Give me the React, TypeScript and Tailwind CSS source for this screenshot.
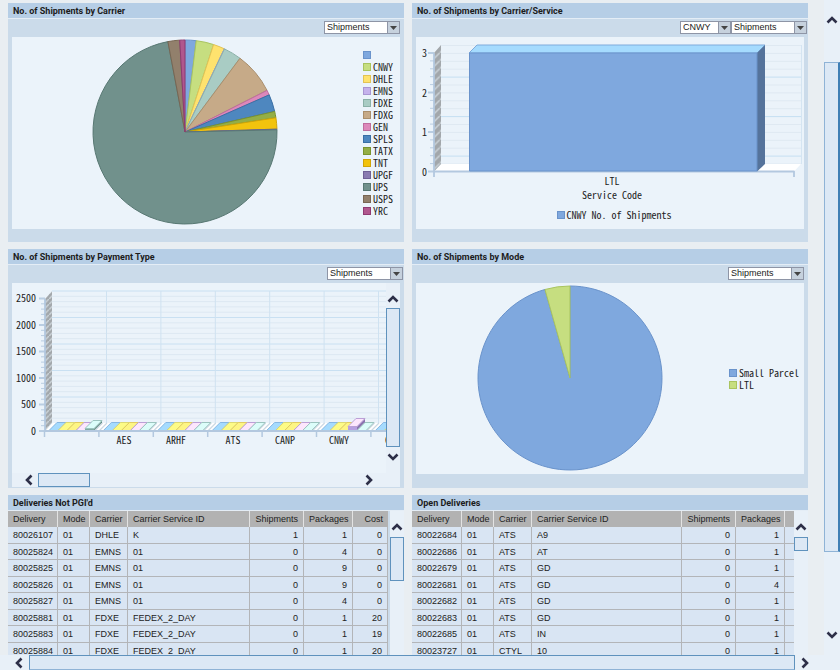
import type { ReactNode } from "react";

type Slice = { label: string; color: string; stroke: string; end: number };

const CARRIERS: Slice[] = [
  { label: "", color: "#7fa8de", stroke: "#6a93cb", end: 7 },
  { label: "CNWY", color: "#c6de80", stroke: "#a9c45f", end: 18.1 },
  { label: "DHLE", color: "#fee26e", stroke: "#e2c355", end: 25.3 },
  { label: "EMNS", color: "#c5b2ec", stroke: "#a896d2", end: 25.4 },
  { label: "FDXE", color: "#a9ccc4", stroke: "#8bb1a8", end: 36.7 },
  { label: "FDXG", color: "#c6aa88", stroke: "#a98e6c", end: 63.1 },
  { label: "GEN", color: "#dc88ba", stroke: "#bf6c9e", end: 66.2 },
  { label: "SPLS", color: "#4e87bf", stroke: "#3a6fa5", end: 77.1 },
  { label: "TATX", color: "#94ae45", stroke: "#7a932e", end: 81.1 },
  { label: "TNT", color: "#f2c30d", stroke: "#d0a508", end: 88.2 },
  { label: "UPGF", color: "#897bb1", stroke: "#6e6096", end: 88.6 },
  { label: "UPS", color: "#71918c", stroke: "#587873", end: 349.3 },
  { label: "USPS", color: "#92806c", stroke: "#786653", end: 356.7 },
  { label: "YRC", color: "#b0578e", stroke: "#8f3a72", end: 360 },
];

const MODES: Slice[] = [
  { label: "Small Parcel", color: "#7fa8de", stroke: "#6a93cb", end: 344.2 },
  { label: "LTL", color: "#c6de80", stroke: "#a9c45f", end: 360 },
];

const NOT_PGI = [
  ["80026107", "01", "DHLE", "K", "1", "1", "0"],
  ["80025824", "01", "EMNS", "01", "0", "4", "0"],
  ["80025825", "01", "EMNS", "01", "0", "9", "0"],
  ["80025826", "01", "EMNS", "01", "0", "9", "0"],
  ["80025827", "01", "EMNS", "01", "0", "4", "0"],
  ["80025881", "01", "FDXE", "FEDEX_2_DAY", "0", "1", "20"],
  ["80025883", "01", "FDXE", "FEDEX_2_DAY", "0", "1", "19"],
  ["80025884", "01", "FDXE", "FEDEX_2_DAY", "0", "1", "20"],
];

const OPEN = [
  ["80022684", "01", "ATS", "A9", "0", "1", ""],
  ["80022686", "01", "ATS", "AT", "0", "1", ""],
  ["80022679", "01", "ATS", "GD", "0", "1", ""],
  ["80022681", "01", "ATS", "GD", "0", "4", ""],
  ["80022682", "01", "ATS", "GD", "0", "1", ""],
  ["80022683", "01", "ATS", "GD", "0", "1", ""],
  ["80022685", "01", "ATS", "IN", "0", "1", ""],
  ["80023727", "01", "CTYL", "10", "0", "1", ""],
];

const CHART_FONT =
  "font-['Noto_Sans_Mono_CJK_SC','DejaVu_Sans_Mono',monospace] text-[10px] leading-3 text-[#222]";

const ARROWS = {
  up: "M1.5 8.5 6 4l4.5 4.5",
  down: "M1.5 3.5 6 8l4.5-4.5",
  left: "M8.5 1.5 4 6l4.5 4.5",
  right: "M3.5 1.5 8 6l-4.5 4.5",
};

function Arrow({ dir }: { dir: keyof typeof ARROWS }) {
  return (
    <button
      type="button"
      aria-label={`Scroll ${dir}`}
      className="flex size-3 shrink-0 cursor-pointer items-center justify-center"
    >
      <svg viewBox="0 0 12 12" className="size-3" fill="none" stroke="#2d2f48" strokeWidth="2.6">
        <path d={ARROWS[dir]} />
      </svg>
    </button>
  );
}

function Picker({ label, value, width }: { label: string; value: string; width: string }) {
  return (
    <div className={`relative h-[13px] ${width}`}>
      <select
        aria-label={label}
        defaultValue={value}
        className="block h-full w-full appearance-none rounded-none border border-[#8e95a6] bg-white pl-0.5 text-[9px] leading-[11px] text-[#222]"
      >
        <option>{value}</option>
      </select>
      <span className="pointer-events-none absolute inset-y-0 right-0 flex w-[13px] items-center justify-center border border-[#8e95a6] bg-[#c6d1dd]">
        <svg viewBox="0 0 7 4" className="h-1 w-[7px]">
          <path d="M0 0h7L3.5 4z" fill="#444" />
        </svg>
      </span>
    </div>
  );
}

function PanelTitle({ children }: { children: ReactNode }) {
  return (
    <h2 className="h-4 shrink-0 border-b border-[#e4edf6] bg-[#b6cee6] px-[5px] font-[Roboto,sans-serif] text-[9px] leading-4 font-bold text-[#1c1c1c]">
      {children}
    </h2>
  );
}

function ChartPanel({
  title,
  tools,
  inset = "pr-1",
  children,
}: {
  title: string;
  tools: ReactNode;
  inset?: string;
  children: ReactNode;
}) {
  return (
    <section className="flex min-h-[239px] flex-col bg-[#cbdbea]">
      <PanelTitle>{title}</PanelTitle>
      <div className={`flex h-[18px] shrink-0 justify-end pt-0.5 ${inset}`}>{tools}</div>
      {children}
    </section>
  );
}

function Swatch({ color, stroke }: { color: string; stroke: string }) {
  return (
    <svg viewBox="0 0 8 8" className="size-2 shrink-0">
      <rect x=".5" y=".5" width="7" height="7" fill={color} stroke={stroke} />
    </svg>
  );
}

function slicePath(start: number, end: number) {
  const at = (deg: number) => {
    const a = (deg * Math.PI) / 180;
    return `${93 + 92 * Math.sin(a)} ${93 - 92 * Math.cos(a)}`;
  };
  return `M93 93 L${at(start)} A92 92 0 ${end - start > 180 ? 1 : 0} 1 ${at(end)}Z`;
}

function Pie({ slices, name }: { slices: Slice[]; name: string }) {
  return (
    <svg viewBox="0 0 186 186" className="size-[186px] shrink-0" role="img" aria-label={name}>
      {slices.map((s, i) => (
        <path
          key={s.label}
          d={slicePath(i ? slices[i - 1].end : 0, s.end)}
          fill={s.color}
          stroke={s.stroke}
          strokeLinejoin="round"
        />
      ))}
    </svg>
  );
}

function Legend({ slices }: { slices: Slice[] }) {
  return (
    <ul className={`self-center ${CHART_FONT}`}>
      {slices.map((s) => (
        <li key={s.label} className="flex h-3 items-center gap-0.5">
          <Swatch color={s.color} stroke={s.stroke} />
          {s.label}
        </li>
      ))}
    </ul>
  );
}

function Hatch({ id, size }: { id: string; size: number }) {
  return (
    <pattern id={id} width={size} height={size} patternUnits="userSpaceOnUse">
      <rect width={size} height={size} fill="#a2a7ab" />
      <path d={`M0 ${size}L${size} 0`} stroke="#ced6db" strokeWidth="1.4" />
    </pattern>
  );
}

function ServiceChart() {
  const rows = Array.from({ length: 16 }, (_, i) => 134.5 - i * 7.9);
  return (
    <svg viewBox="0 0 388 166" className={`block w-full ${CHART_FONT}`} fill="currentColor">
      <defs>
        <Hatch id="service-wall" size={7.9} />
      </defs>
      {rows.map((y, i) => (
        <g key={y}>
          <path d={`M25 ${y - 7.5}H385`} stroke={i % 5 === 1 ? "#c5dff2" : "#dfe9f2"} />
          <path
            d={`M${i % 5 === 0 ? 12 : 14} ${y}H18`}
            stroke="#b9cde2"
            strokeWidth={i % 5 === 0 ? 2 : 1}
          />
        </g>
      ))}
      <path d="M385.5 8V127" stroke="#d5e5f2" />
      <path d="M18 134.5l7.5-7.5H385l-7 7.5z" fill="#fff" />
      <path d="M18 16l7-8v119l-7 7.5z" fill="url(#service-wall)" />
      <path
        d="M18 16V140M18 134.5H378.5M378 134v6"
        stroke="#b3c8df"
        strokeWidth="1.8"
        fill="none"
      />
      <path d="M53 16l8-8h288l-8 8z" fill="#a5dbfe" stroke="#7eabdc" />
      <path d="M341 16l8-8v119l-8 7.5z" fill="#55739b" />
      <path d="M53.5 16H341V134H53.5z" fill="#7fa8de" stroke="#6a93cb" />
      {[0, 1, 2, 3].map((n) => (
        <text key={n} x="11" y={138.5 - n * 39.5} textAnchor="end">
          {n}
        </text>
      ))}
      <text x="196" y="148" textAnchor="middle">
        LTL
      </text>
      <text x="196" y="162" textAnchor="middle">
        Service Code
      </text>
    </svg>
  );
}

const BARS = [
  { top: "#a5dbfe", edge: "#86b7e4", front: "#7fa8de" },
  { top: "#fdfb86", edge: "#dcd873", front: "#c6de80" },
  { top: "#fdf584", edge: "#e2cb62", front: "#fee26e" },
  { top: "#fde6fd", edge: "#bba0d6", front: "#b79fe0" },
  { top: "#dcfdfa", edge: "#9cc4bf", front: "#83aaa3" },
];

const PAYMENT_LABELS = [
  { text: "AES", x: 112 },
  { text: "ARHF", x: 164 },
  { text: "ATS", x: 221 },
  { text: "CANP", x: 273 },
  { text: "CNWY", x: 327 },
  { text: "CTYL", x: 383 },
];

// heights of the few bars that rise above the floor, keyed by group-bar
const RAISED: Record<string, number> = { "0-4": 2, "5-3": 4 };

function PaymentChart() {
  const rows = Array.from({ length: 26 }, (_, i) => 148 - i * 5.3);
  const groups = [0, 1, 2, 3, 4, 5, 6];
  return (
    <svg
      viewBox="0 0 374 190"
      preserveAspectRatio="xMinYMin slice"
      className={`block w-full ${CHART_FONT}`}
      fill="currentColor"
    >
      <defs>
        <Hatch id="payment-wall" size={5.3} />
      </defs>
      {rows.map((y, i) => (
        <g key={y}>
          <path d={`M40 ${y - 7.5}H374`} stroke={i % 5 === 0 ? "#c9e0f2" : "#dde8f2"} />
          <path
            d={`M${i % 5 === 0 ? 27 : 29} ${y}H33`}
            stroke="#b9cde2"
            strokeWidth={i % 5 === 0 ? 2 : 1}
          />
        </g>
      ))}
      {groups.slice(0, 6).map((g) => (
        <path key={g} d={`M${94.5 + g * 54.4} 8V140`} stroke="#cfe2f1" />
      ))}
      <path d="M33 148l7.5-8H374v8z" fill="#fff" />
      <path d="M33 16l7-8v132l-7 8z" fill="url(#payment-wall)" />
      {groups.map((g) => (
        <g key={g}>
          <path
            d={`M${82.5 + g * 54.4} 148l8-8M${87 + g * 54.4} 148l8-8`}
            stroke="#ccd8e3"
            strokeWidth="1.2"
          />
          {BARS.map((b, i) => {
            const x = 37 + g * 54.4 + i * 9;
            const h = RAISED[`${g}-${i}`] ?? 0;
            const y = 147.5 - h;
            return (
              <g key={i}>
                {h > 0 && (
                  <>
                    <path d={`M${x} ${y}h9v${h}h-9z`} fill={b.front} />
                    <path
                      d={`M${x + 9} ${y}l8-8v${h}l-8 8z`}
                      fill={i === 3 ? "#8b74b0" : "#5f8a82"}
                    />
                  </>
                )}
                <path d={`M${x} ${y}l8-8h9l-8 8z`} fill={b.top} stroke={b.edge} />
              </g>
            );
          })}
          <path d={`M${32.5 + g * 54.4} 148v6`} stroke="#b3c8df" strokeWidth="1.5" />
        </g>
      ))}
      <path d="M33 16V148H374" stroke="#b3c8df" strokeWidth="1.8" fill="none" />
      {[0, 1, 2, 3, 4, 5].map((n) => (
        <text key={n} x="24" y={151.5 - n * 26.5} textAnchor="end">
          {n * 500}
        </text>
      ))}
      {PAYMENT_LABELS.map((l) => (
        <text key={l.text} x={l.x} y="161" textAnchor="middle">
          {l.text}
        </text>
      ))}
    </svg>
  );
}

const COLUMNS = ["Delivery", "Mode", "Carrier", "Carrier Service ID", "Shipments", "Packages", "Cost"];

function DeliveryTable({
  title,
  rows,
  minWidth,
  gutter,
  thumb,
}: {
  title: string;
  rows: string[][];
  minWidth: string;
  gutter: string;
  thumb: string;
}) {
  return (
    <section className="min-w-0">
      <PanelTitle>{title}</PanelTitle>
      <div className="flex">
        <div className="min-w-0 flex-1 overflow-hidden">
          <table
            aria-label={title}
            className={`w-full table-fixed border-separate border-spacing-0 text-[9px] leading-3 text-[#222] ${minWidth}`}
          >
            <colgroup>
              <col className="w-[50px]" />
              <col className="w-8" />
              <col className="w-[38px]" />
              <col />
              <col className="w-[54px]" />
              <col className="w-[49px]" />
              <col className="w-[35px]" />
            </colgroup>
            <thead>
              <tr className="h-4 bg-[#b2b2b2]">
                {COLUMNS.map((c, i) => (
                  <th
                    key={c}
                    className={`border-r border-[#e3e3e3] px-[5px] py-0 font-normal whitespace-nowrap last:border-r-0 ${i > 3 ? "text-right" : "text-left"}`}
                  >
                    {c}
                  </th>
                ))}
              </tr>
            </thead>
            <tbody>
              {rows.map((row) => (
                <tr key={row[0]} className="h-[17px] bg-[#d9e5f3] even:h-4">
                  {row.map((cell, i) => (
                    <td
                      key={i}
                      className={`border-r border-b border-[#b3b5b8] px-[5px] py-0 whitespace-nowrap ${i > 3 ? "text-right" : "text-left"}`}
                    >
                      {cell}
                    </td>
                  ))}
                </tr>
              ))}
            </tbody>
          </table>
        </div>
        <div className={`flex shrink-0 flex-col items-center bg-[#e8f0f8] pt-[10px] ${gutter}`}>
          <Arrow dir="up" />
          <div className={`mt-1 w-full border border-[#5f92bd] bg-[#dce8f5] ${thumb}`} />
        </div>
      </div>
    </section>
  );
}

export default function App() {
  return (
    <div className="flex h-screen flex-col bg-[#e9eef2] font-['Liberation_Sans',Arial,sans-serif]">
      <div className="flex min-h-0 flex-1">
        <main className="grid min-w-0 flex-1 auto-rows-max grid-cols-2 gap-x-2 gap-y-[7px] overflow-hidden pt-[3px] pr-4 pl-2">
          <ChartPanel
            title="No. of Shipments by Carrier"
            tools={<Picker label="Carrier measure" value="Shipments" width="w-[76px]" />}
          >
            <div className="mx-1 flex h-[192px] items-start justify-between bg-[#ebf3fa] py-0.5 pr-[7px] pl-20">
              <Pie slices={CARRIERS} name="Shipments by carrier" />
              <Legend slices={CARRIERS} />
            </div>
          </ChartPanel>

          <ChartPanel
            title="No. of Shipments by Carrier/Service"
            inset="pr-px"
            tools={
              <>
                <Picker label="Carrier" value="CNWY" width="w-[51px]" />
                <Picker label="Service measure" value="Shipments" width="w-[76px]" />
              </>
            }
          >
            <div className="mx-1 min-h-[192px] bg-[#ebf3fa]">
              <ServiceChart />
              <div className={`mt-1.5 flex items-center justify-center gap-0.5 pl-2 ${CHART_FONT}`}>
                <Swatch color="#7fa8de" stroke="#6a93cb" />
                CNWY No. of Shipments
              </div>
            </div>
          </ChartPanel>

          <ChartPanel
            title="No. of Shipments by Payment Type"
            inset="pr-px"
            tools={<Picker label="Payment measure" value="Shipments" width="w-[76px]" />}
          >
            <div className="mx-1 flex bg-[#e8f0f8]">
              <div className="min-w-0 flex-1 bg-[#ebf3fa]">
                <PaymentChart />
              </div>
              <div className="flex w-3.5 flex-col items-center pt-[10px] pb-[10px]">
                <Arrow dir="up" />
                <div className="mt-[3px] mb-1 w-full flex-1 border border-[#5f92bd] bg-[#dce8f5]" />
                <Arrow dir="down" />
              </div>
            </div>
            <div className="mx-1 flex h-3.5 items-center bg-[#e8f0f8] pr-[25px] pl-[11px]">
              <Arrow dir="left" />
              <div className="ml-[3px] h-full w-[52px] border border-[#5f92bd] bg-[#dce8f5]" />
              <div className="flex-1" />
              <Arrow dir="right" />
            </div>
          </ChartPanel>

          <ChartPanel
            title="No. of Shipments by Mode"
            tools={<Picker label="Mode measure" value="Shipments" width="w-[76px]" />}
          >
            <div className="mx-1 flex h-[191px] items-start justify-between bg-[#ebf3fa] py-0.5 pr-[5px] pl-[61px]">
              <Pie slices={MODES} name="Shipments by mode" />
              <Legend slices={MODES} />
            </div>
          </ChartPanel>

          <DeliveryTable
            title="Deliveries Not PGI'd"
            rows={NOT_PGI}
            minWidth="min-w-[380px]"
            gutter="w-4 border-l-2 border-[#cbdbea]"
            thumb="h-11"
          />
          <DeliveryTable
            title="Open Deliveries"
            rows={OPEN}
            minWidth="min-w-[408px]"
            gutter="w-3.5"
            thumb="h-3.5"
          />
        </main>

        <div className="flex w-4 shrink-0 flex-col items-center bg-[#e8f0f8] pt-[14px] pb-[14px]">
          <Arrow dir="up" />
          <div className="mt-9 mb-[77px] w-full flex-1 border border-r-2 border-[#8fb3d6] border-r-[#3f7fb5] bg-[#dce8f5]" />
          <Arrow dir="down" />
        </div>
      </div>

      <div className="flex h-[15px] shrink-0 items-center bg-[#e8f0f8] pr-[29px] pl-[13px]">
        <Arrow dir="left" />
        <div className="mr-1 ml-1 h-full flex-1 border border-[#5f92bd] border-b-[#8fb3d6] bg-[#dce8f5]" />
        <Arrow dir="right" />
      </div>
    </div>
  );
}
